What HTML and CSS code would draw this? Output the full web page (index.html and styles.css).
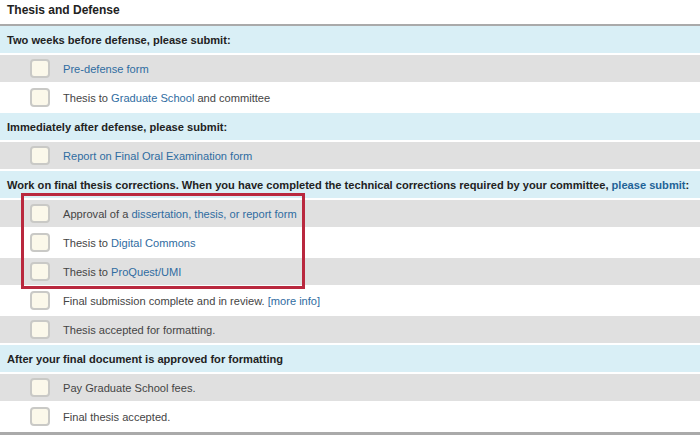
FILE: index.html
```html
<!DOCTYPE html>
<html>
<head>
<meta charset="utf-8">
<link rel="stylesheet" href="styles.css">
</head>
<body>
<div class="panel">
  <div class="title">Thesis and Defense</div>
  <div class="list">
    <div class="row head"><span>Two weeks before defense, please submit:</span></div>
    <div class="row item gray"><span class="box"></span><span class="txt"><a>Pre-defense form</a></span></div>
    <div class="row item"><span class="box"></span><span class="txt">Thesis to <a>Graduate School</a> and committee</span></div>
    <div class="row head"><span>Immediately after defense, please submit:</span></div>
    <div class="row item gray"><span class="box"></span><span class="txt"><a>Report on Final Oral Examination form</a></span></div>
    <div class="row head"><span>Work on final thesis corrections. When you have completed the technical corrections required by your committee, <a>please submit</a>:</span></div>
    <div class="group">
      <div class="row item gray"><span class="box"></span><span class="txt">Approval of a <a>dissertation, thesis, or report form</a></span></div>
      <div class="row item"><span class="box"></span><span class="txt">Thesis to <a>Digital Commons</a></span></div>
      <div class="row item gray"><span class="box"></span><span class="txt">Thesis to <a>ProQuest/UMI</a></span></div>
      <div class="highlight"></div>
    </div>
    <div class="row item"><span class="box"></span><span class="txt">Final submission complete and in review. <a>[more info]</a></span></div>
    <div class="row item gray"><span class="box"></span><span class="txt">Thesis accepted for formatting.</span></div>
    <div class="row head"><span>After your final document is approved for formatting</span></div>
    <div class="row item gray"><span class="box"></span><span class="txt">Pay Graduate School fees.</span></div>
    <div class="row item"><span class="box"></span><span class="txt">Final thesis accepted.</span></div>
  </div>
</div>
</body>
</html>
```
FILE: styles.css
```css
html, body {
  margin: 0;
  padding: 0;
  background: #ffffff;
}
body {
  font-family: "Liberation Sans", Arial, sans-serif;
  color: #333333;
}
.panel {
  width: 700px;
}
.title {
  height: 24px;
  line-height: 21px;
  padding-left: 7px;
  font-size: 12px;
  font-weight: bold;
  color: #222;
}
.list {
  border-top: 2px solid #aaaaaa;
  border-bottom: 3px solid #aaaaaa;
  display: flex;
  flex-direction: column;
}
.group {
  position: relative;
  display: flex;
  flex-direction: column;
}
.row {
  height: 27px;
  border-bottom: 2px solid #ffffff;
  display: flex;
  align-items: center;
}
.head {
  background: #d9eff6;
  padding-left: 7px;
  font-size: 11.1px;
  font-weight: bold;
  color: #222;
  white-space: nowrap;
}
.head a {
  color: #1f6397;
}
.item {
  background: #ffffff;
  padding-left: 30px;
  font-size: 11.1px;
}
.item.gray {
  background: #e0e0e0;
}
.box {
  width: 16px;
  height: 15px;
  border: 2px solid #c9c9c6;
  border-radius: 4px;
  background: #fbf8ea;
  flex: none;
}
.txt {
  margin-left: 13px;
  color: #444;
}
a {
  color: #2f6ca1;
  text-decoration: none;
}
.highlight {
  position: absolute;
  left: 21px;
  top: -7px;
  width: 278px;
  height: 90px;
  border: 3px solid #b9283e;
  pointer-events: none;
}
```
